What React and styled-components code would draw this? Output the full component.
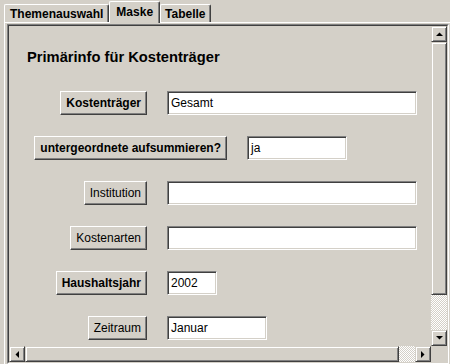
import React from 'react';
import styled, { createGlobalStyle } from 'styled-components';

const Global = createGlobalStyle`
  html, body { margin: 0; padding: 0; background: #d4d0c8; }
  body {
    font-family: "Liberation Sans", Arial, sans-serif;
    font-size: 12px;
    color: #000;
    overflow: hidden;
  }
  * { box-sizing: border-box; }
`;

const Frame = styled.div`
  width: 450px;
  height: 364px;
  display: flex;
  flex-direction: column;
  background: #d4d0c8;
  overflow: hidden;
`;

const TabBar = styled.div`
  display: flex;
  align-items: flex-end;
  height: 22px;
  padding-left: 4px;
`;

const Tab = styled.div`
  position: relative;
  z-index: ${p => (p.$active ? 1 : 0)};
  height: ${p => (p.$active ? '22px' : '18px')};
  margin-bottom: ${p => (p.$active ? '-1px' : '0')};
  padding: 0 ${p => (p.$active ? '6px' : p.$pad || '4px')} ${p => (p.$active ? '2px' : '0')};
  background: #d4d0c8;
  border-top: 1px solid #fff;
  border-left: 1px solid #fff;
  border-right: 1px solid #404040;
  box-shadow: inset -1px 0 0 #808080;
  border-radius: 2px 2px 0 0;
  font-weight: bold;
  font-size: 12px;
  display: flex;
  align-items: center;
  white-space: nowrap;
`;

const Panel = styled.div`
  flex: 1;
  min-height: 0;
  margin-left: 4px;
  border-top: 1px solid #fff;
  border-left: 1px solid #fff;
  padding: 1px 1px 0 2px;
  display: flex;
`;

const ScrollPane = styled.div`
  flex: 1;
  display: flex;
  border: 1px solid;
  border-color: #808080 #fff #fff #808080;
`;

const ScrollInner = styled.div`
  flex: 1;
  display: grid;
  grid-template-columns: 1fr 16px;
  grid-template-rows: 1fr 16px;
  border: 1px solid;
  border-color: #404040 #d4d0c8 #d4d0c8 #404040;
  min-height: 0;
`;

const Viewport = styled.div`
  overflow: hidden;
  padding: 23px 0 0 18px;
  min-width: 0;
  min-height: 0;
`;

const Title = styled.div`
  font-size: 14.7px;
  line-height: 17px;
  font-weight: bold;
  margin-bottom: 25px;
  white-space: nowrap;
`;

const Form = styled.div`
  display: flex;
  flex-direction: column;
  gap: 21px;
`;

const Row = styled.div`
  display: flex;
  gap: 20px;
  height: 24px;
`;

const LabelCell = styled.div`
  width: ${p => p.$w}px;
  flex: none;
  display: flex;
  justify-content: flex-end;
`;

const Button = styled.div`
  height: 24px;
  padding: 0 5px;
  display: flex;
  align-items: center;
  white-space: nowrap;
  font-weight: ${p => (p.$bold ? 'bold' : 'normal')};
  border: 1px solid;
  border-color: #fff #404040 #404040 #fff;
  box-shadow: inset -1px -1px 0 #808080;
  background: #d4d0c8;
`;

const Field = styled.div`
  width: ${p => p.$w}px;
  flex: none;
  height: 24px;
  background: #fff;
  border: 1px solid;
  border-color: #808080 #fff #fff #808080;
  box-shadow: inset 1px 1px 0 #404040, inset -1px -1px 0 #d4d0c8;
  padding-left: 3px;
  display: flex;
  align-items: center;
  white-space: nowrap;
`;

const VScroll = styled.div`
  display: flex;
  flex-direction: column;
  min-height: 0;
`;

const HScroll = styled.div`
  display: flex;
`;

const ArrowBtn = styled.div`
  flex: none;
  width: 16px;
  height: 16px;
  display: flex;
  align-items: center;
  justify-content: center;
  background: #d4d0c8;
  border: 1px solid;
  border-color: #d4d0c8 #404040 #404040 #d4d0c8;
  box-shadow: inset 1px 1px 0 #fff, inset -1px -1px 0 #808080;
`;

const Thumb = styled.div`
  flex: 0 0 ${p => p.$size}px;
  background: #d4d0c8;
  border: 1px solid;
  border-color: #d4d0c8 #404040 #404040 #d4d0c8;
  box-shadow: inset 1px 1px 0 #fff, inset -1px -1px 0 #808080;
`;

const Track = styled.div`
  flex: 1;
  background-color: #fff;
  background-image: repeating-conic-gradient(#d4d0c8 0 25%, #fff 0 50%);
  background-size: 2px 2px;
`;

const Corner = styled.div`
  background: #d4d0c8;
`;

const Arrow = ({ dir }) => {
  const pts = {
    up: '0,4 7,4 3.5,0.5',
    down: '0,0 7,0 3.5,3.5',
    left: '4,0 4,7 0.5,3.5',
    right: '0,0 0,7 3.5,3.5',
  }[dir];
  const vert = dir === 'up' || dir === 'down';
  return (
    <svg width={vert ? 7 : 4} height={vert ? 4 : 7} viewBox={vert ? '0 0 7 4' : '0 0 4 7'}>
      <polygon points={pts} fill="#000" />
    </svg>
  );
};

const rows = [
  { label: 'Kostenträger', bold: true, value: 'Gesamt', lw: 120, fw: 250 },
  { label: 'untergeordnete aufsummieren?', bold: true, value: 'ja', lw: 200, fw: 100 },
  { label: 'Institution', bold: false, value: '', lw: 120, fw: 250 },
  { label: 'Kostenarten', bold: false, value: '', lw: 120, fw: 250 },
  { label: 'Haushaltsjahr', bold: true, value: '2002', lw: 120, fw: 50 },
  { label: 'Zeitraum', bold: false, value: 'Januar', lw: 120, fw: 100 },
];

export default function App() {
  return (
    <>
      <Global />
      <Frame>
        <TabBar>
          <Tab $pad="5px">Themenauswahl</Tab>
          <Tab $active>Maske</Tab>
          <Tab>Tabelle</Tab>
        </TabBar>
        <Panel>
          <ScrollPane>
            <ScrollInner>
              <Viewport>
                <Title>Primärinfo für Kostenträger</Title>
                <Form>
                  {rows.map(r => (
                    <Row key={r.label}>
                      <LabelCell $w={r.lw}>
                        <Button $bold={r.bold}>{r.label}</Button>
                      </LabelCell>
                      <Field $w={r.fw}>{r.value}</Field>
                    </Row>
                  ))}
                </Form>
              </Viewport>
              <VScroll>
                <ArrowBtn><Arrow dir="up" /></ArrowBtn>
                <Thumb $size={253} />
                <Track />
                <ArrowBtn><Arrow dir="down" /></ArrowBtn>
              </VScroll>
              <HScroll>
                <ArrowBtn><Arrow dir="left" /></ArrowBtn>
                <Thumb $size={374} />
                <Track />
                <ArrowBtn><Arrow dir="right" /></ArrowBtn>
              </HScroll>
              <Corner />
            </ScrollInner>
          </ScrollPane>
        </Panel>
      </Frame>
    </>
  );
}
